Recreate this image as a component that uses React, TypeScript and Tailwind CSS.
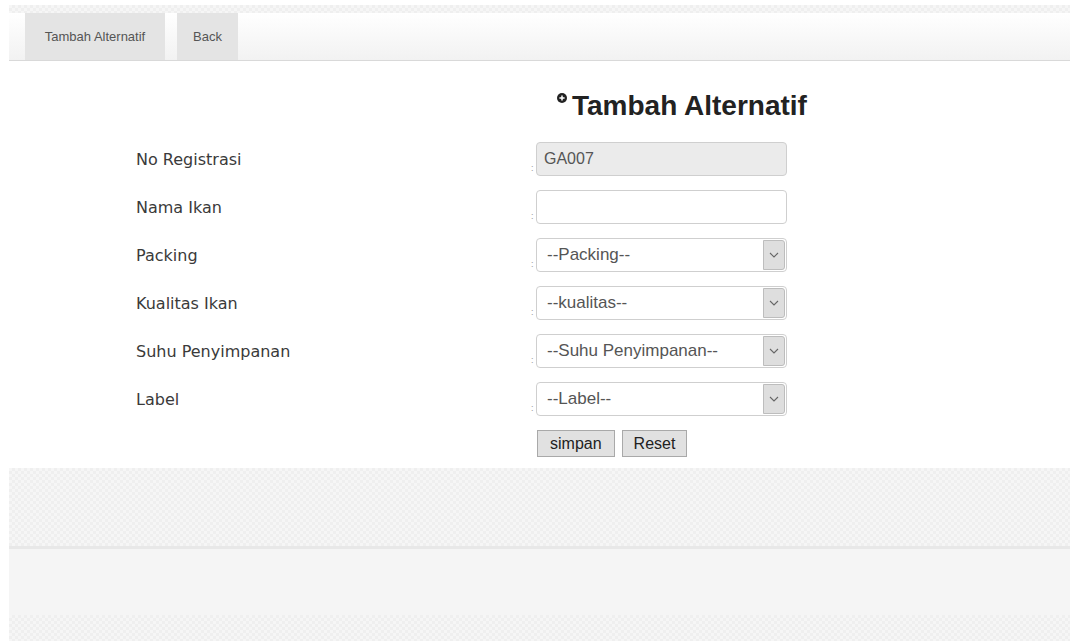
import { ReactNode } from "react";

const checker =
  "bg-[repeating-conic-gradient(#efefef_0_25%,#f6f6f6_0_50%)] bg-[length:6px_6px]";

function Colon() {
  return (
    <span className="w-[5px] self-end pb-[3px] text-[9px] leading-none text-[#9a9a9a]">:</span>
  );
}

function Field({ label, children }: { label: string; children: ReactNode }) {
  return (
    <div className="flex h-[48px] items-center">
      <div className="w-[395px] pt-[2px] text-[16px] text-[#3a3a3a] [font-family:'DejaVu_Sans',Verdana,sans-serif]">
        {label}
      </div>
      <div className="flex h-[34px] items-stretch">
        <Colon />
        {children}
      </div>
    </div>
  );
}

function TextBox({ value, readOnly }: { value?: string; readOnly?: boolean }) {
  return (
    <div
      className={`flex w-[251px] items-center rounded-[4px] border border-[#cfcfcf] px-[7px] text-[16px] text-[#555] ${
        readOnly ? "bg-[#ebebeb]" : "bg-white"
      }`}
    >
      {value}
    </div>
  );
}

function Select({ placeholder }: { placeholder: string }) {
  return (
    <div className="flex w-[251px] items-stretch rounded-[4px] border border-[#cfcfcf] bg-white pl-[10px] text-[17px] text-[#555]">
      <span className="flex flex-1 items-center">{placeholder}</span>
      <span className="my-[1px] mr-[1px] flex w-[22px] items-center justify-center rounded-r-[3px] border border-[#bdbdbd] bg-[#dedede]">
        <svg width="10" height="6" viewBox="0 0 10 6" fill="none">
          <path d="M1 1l4 4 4-4" stroke="#666" strokeWidth="1.1" />
        </svg>
      </span>
    </div>
  );
}

export default function App() {
  return (
    <div className="min-h-[641px] bg-white [font-family:'Liberation_Sans',Arial,sans-serif]">
      <div className="pl-[9px] pt-[5px]">
        <div className={`h-[8px] ${checker}`} />
        <div className="flex h-[48px] border-b border-[#d9d9d9] bg-gradient-to-b from-white to-[#f2f2f2] pl-[16px]">
          <div className="flex w-[140px] items-center justify-center bg-[#e4e4e4] text-[13px] text-[#555]">
            Tambah Alternatif
          </div>
          <div className="ml-[12px] flex w-[61px] items-center justify-center bg-[#e4e4e4] text-[13px] text-[#555]">
            Back
          </div>
        </div>
      </div>

      <div className="pl-[557px] pt-[28px]">
        <h1 className="flex items-start text-[28px] font-bold leading-[34px] text-[#222]">
          <svg width="10" height="10" viewBox="0 0 10 10" className="mr-[5px] mt-[4px]">
            <circle cx="5" cy="5" r="5" fill="#222" />
            <path d="M5 2.4v5.2M2.4 5h5.2" stroke="#fff" strokeWidth="1.5" />
          </svg>
          Tambah Alternatif
        </h1>
      </div>

      <div className="pl-[136px] pt-[12px]">
        <Field label="No Registrasi">
          <TextBox value="GA007" readOnly />
        </Field>
        <Field label="Nama Ikan">
          <TextBox />
        </Field>
        <Field label="Packing">
          <Select placeholder="--Packing--" />
        </Field>
        <Field label="Kualitas Ikan">
          <Select placeholder="--kualitas--" />
        </Field>
        <Field label="Suhu Penyimpanan">
          <Select placeholder="--Suhu Penyimpanan--" />
        </Field>
        <Field label="Label">
          <Select placeholder="--Label--" />
        </Field>
        <div className="flex gap-[7px] pl-[401px] pt-[7px]">
          <button className="h-[27px] border border-[#a9a9a9] bg-[#e1e1e1] px-[12px] text-[16px] text-[#222]">
            simpan
          </button>
          <button className="h-[27px] border border-[#a9a9a9] bg-[#e1e1e1] px-[11px] text-[16px] text-[#222]">
            Reset
          </button>
        </div>
      </div>

      <div className="mt-[11px] pl-[9px]">
        <div className={`h-[78px] ${checker}`} />
        <div className="h-[3px] bg-[#e8e8e8]" />
        <div className="h-[66px] bg-[#f5f5f5]" />
        <div className={`h-[26px] ${checker}`} />
      </div>
    </div>
  );
}
